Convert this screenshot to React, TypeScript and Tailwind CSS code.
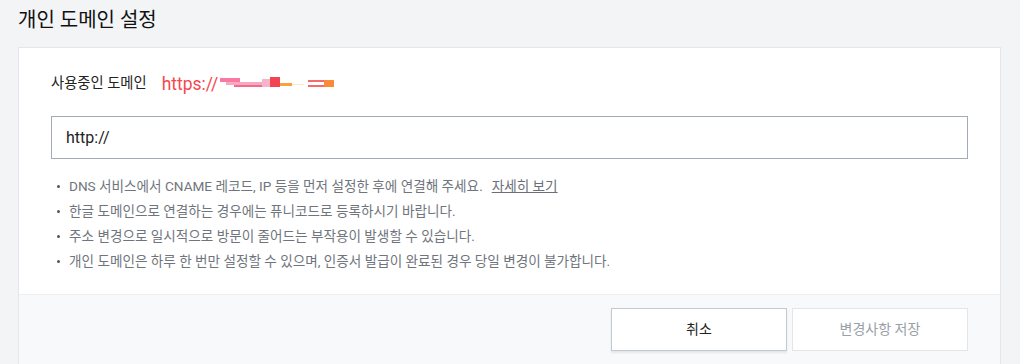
export default function App() {
  const notes = [
    'DNS 서비스에서 CNAME 레코드, IP 등을 먼저 설정한 후에 연결해 주세요.',
    '한글 도메인으로 연결하는 경우에는 퓨니코드로 등록하시기 바랍니다.',
    '주소 변경으로 일시적으로 방문이 줄어드는 부작용이 발생할 수 있습니다.',
    '개인 도메인은 하루 한 번만 설정할 수 있으며, 인증서 발급이 완료된 경우 당일 변경이 불가합니다.',
  ]

  return (
    <div
      className="min-h-screen bg-[#f3f4f6] pl-[18px] pr-[19px] overflow-hidden"
      style={{ fontFamily: 'Roboto, "Noto Sans CJK KR", sans-serif' }}
    >
      <h1 className="h-[47px] pt-[6px] text-[20px] leading-[28px] text-[#111] font-normal">
        개인 도메인 설정
      </h1>

      <div className="border border-[#e3e6ea] bg-white">
        <div className="px-[32px] pt-[24px] pb-[20px]">
          <div className="flex items-center h-6">
            <span className="text-[14.3px] text-[#222]">사용중인 도메인</span>
            <span className="ml-[15px] text-[17.5px] text-[#f5474f]">https://</span>
            <svg width="120" height="14" viewBox="0 0 120 14">
              <rect x="2" y="1" width="20" height="4" fill="#f87aa0" />
              <rect x="8" y="5" width="36" height="3" fill="#f9a8c4" />
              <rect x="16" y="8" width="30" height="2" fill="#f56a8a" />
              <rect x="44" y="2" width="8" height="8" fill="#f7b3cc" />
              <rect x="52" y="0" width="10" height="10" fill="#f04452" />
              <rect x="62" y="6" width="12" height="3" fill="#f9a040" />
              <rect x="74" y="7" width="12" height="1" fill="#fde8c8" />
              <rect x="90" y="3" width="24" height="2" fill="#f56a6a" />
              <rect x="90" y="8" width="18" height="2" fill="#f56a6a" />
              <rect x="106" y="3" width="10" height="7" fill="#fb8a3c" />
            </svg>
          </div>

          <input
            defaultValue="http://"
            className="mt-5 block w-full h-[43px] border border-[#a3abb6] px-[14px] text-[16px] text-[#222] outline-none"
          />

          <ul className="mt-[15px] pl-[6px]">
            {notes.map((t, i) => (
              <li key={i} className="flex items-center h-[25px] text-[13.6px] text-[#70757d]">
                <span className="w-[3px] h-[3px] rounded-full bg-[#555] mr-[9px]" />
                <span>{t}</span>
                {i === 0 && (
                  <a href="#" className="ml-[9px] underline text-[#6b7079]">
                    자세히 보기
                  </a>
                )}
              </li>
            ))}
          </ul>
        </div>

        <div className="border-t border-[#eceef1] bg-[#f8f9fb] flex justify-end gap-[5px] pt-[13px] pb-[14px] pr-[32px]">
          <button className="w-[176px] h-[43px] bg-white border border-[#c3c9d1] shadow-[0_2px_2px_rgba(0,0,0,0.08)] text-[14px] text-[#222]">
            취소
          </button>
          <button
            disabled
            className="w-[176px] h-[43px] bg-white border border-[#e2e5e9] text-[14px] text-[#9aa0a8]"
          >
            변경사항 저장
          </button>
        </div>
      </div>
    </div>
  )
}
